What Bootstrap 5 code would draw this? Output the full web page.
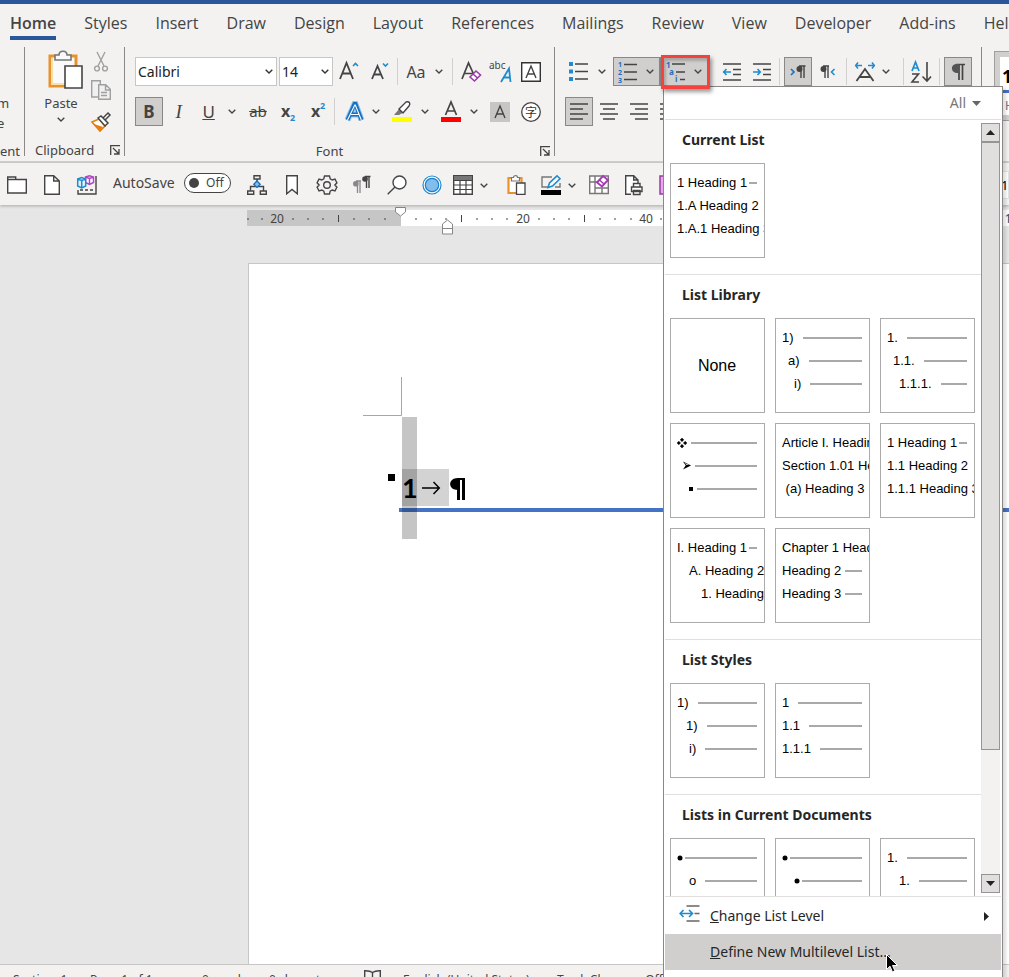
<!DOCTYPE html>
<html lang="en">
<head>
<meta charset="utf-8">
<meta name="viewport" content="width=device-width, initial-scale=1">
<title>Document - Word</title>
<link href="https://cdn.jsdelivr.net/npm/bootstrap@5.3.0/dist/css/bootstrap.min.css" rel="stylesheet">
<style>
  :root { --ink:#444; --line:#a6a6a6; --chrome:#f3f2f1; --blue:#2b579a; --accent:#1e8bcd; --on:#d0cfcd; }
  body { font-family:"Noto Sans","Noto Sans CJK SC",sans-serif; font-size:14px; line-height:20px; color:var(--ink); background:#e6e6e6; }
  button { color:inherit; }
  svg { display:block; flex:none; overflow:visible; }
  .ln { fill:none; stroke:#444; stroke-width:1.4; }
  .titleline { height:4px; background:var(--blue); }
  .tabs { height:43px; gap:28px; padding:0 10px; background:var(--chrome); font:16px/38px "Open Sans","Noto Sans",sans-serif; }
  .tabs a { color:var(--ink); text-decoration:none; white-space:nowrap; height:37px; }
  .tabs a.current { font-weight:600; border-bottom:4px solid var(--blue); height:36px; }
  .ribbon { background:var(--chrome); height:116px; border-bottom:2px solid #d2d0ce; }
  .rgroup { padding:10px 9px 0 10px; height:109px; border-right:1px solid #8a8886; }
  .rrow { height:29px; gap:2px; margin-bottom:11px; }
  .glabel { font-size:13px; height:18px; line-height:18px; margin-top:4px; position:relative; flex:none; }
  .rrow + .glabel { margin-top:16px; }
  .tool { width:28px; height:29px; border:1px solid transparent; background:none; padding:0; display:flex; align-items:center; justify-content:center; line-height:1; font-size:17px; }
  .caret { width:18px; height:29px; border:0; background:none; padding:0; display:flex; align-items:center; justify-content:center; }
  .on { background:var(--on); border:1px solid #8a8886; }
  .vsep { width:1px; height:27px; background:#d2d0ce; margin:0 2px; }
  .combo { appearance:none; border:1px solid #c8c6c4; border-radius:0; background:#fff url("data:image/svg+xml,%3Csvg xmlns='http://www.w3.org/2000/svg' width='8' height='5'%3E%3Cpath d='M.7.7 4 4 7.3.7' fill='none' stroke='%23333' stroke-width='1.4'/%3E%3C/svg%3E") no-repeat right 3px center; padding:0 2px; height:29px; font-size:14px; color:#222; }
  .face { width:142px; } .pts { width:54px; }
  .callout { position:absolute; inset:-2px -2px -3px 1px; border:3px solid #f4433f; box-shadow:2px 3px 4px #0006, inset 2px 3px 3px #0003; z-index:20; pointer-events:none; }
  .gallery { position:absolute; top:100%; left:3px; width:340px; height:calc(100vh - 86px); background:#fff; border:1px solid #8a8886; border-bottom:0; padding:0 1px 7px; z-index:10; box-shadow:3px 2px 3px #0002; color:#262626; }
  .filter { height:33px; border-bottom:1px solid #e1dfdd; padding:0 20px 0 0; flex:none; }
  .filter button { border:0; background:none; color:#777; padding:0; gap:6px; }
  .lists { flex:1 1 0; min-height:0; overflow:hidden; }
  .lists section { padding:0 5px 16px; border-bottom:1px solid #e1dfdd; }
  .lists section:last-child { border:0; }
  .lists h2 { font-size:14px; font-weight:700; line-height:20px; margin:0; padding:10px 12px 13px; height:43px; }
  .thumbs { gap:10px; }
  .thumb { width:95px; height:95px; border:1px solid #ababab; background:#fff; padding:7px 7px 0 6px; overflow:hidden; font:13px/23px "Liberation Sans",sans-serif; color:#000; display:flex; flex-direction:column; text-align:left; white-space:nowrap; }
  .thumb span { display:flex; align-items:center; gap:9px; height:23px; flex:none; width:100%; }
  .thumb span::after { content:""; flex:1 1 auto; height:2px; background:#a9a9a9; }
  .thumb .tight { gap:2px; } .thumb .mid { gap:4px; }
  .thumb .full::after { display:none; }
  .thumb .i1 { padding-left:6px; } .thumb .i2 { padding-left:12px; } .thumb .i4 { padding-left:24px; } .thumb .i3 { padding-left:9px; }
  .thumb .blank { font-size:16px; justify-content:center; height:79px; }
  .sbar { width:19px; margin:3px 1px 3px 0; background:#f3f2f1; }
  .sbar button { height:19px; border:1px solid #979593; background:#e1dfdd; padding:0; display:flex; align-items:center; justify-content:center; }
  .sbar .grip { flex:0 0 83%; border:1px solid #979593; background:#e1dfdd; }
  .cmds { border-top:1px solid #e1dfdd; padding-top:1px; }
  .cmds button { height:36px; border:0; background:none; width:100%; text-align:left; padding:0 12px; display:flex; align-items:center; position:relative; }
  .cmds button > svg:first-child, .cmds .noicon { width:23px; margin-right:10px; }
  .cmds .hover { background:var(--on); }
  .pointer { position:absolute; left:221px; top:20px; }
  .quick { background:var(--chrome); height:42px; padding:2px 0 0 5px; gap:11px; box-shadow:0 1px 3px #0004; position:relative; z-index:1; }
  .quick .tool { width:24px; } .quick .wide { width:22px; } .quick .caret { width:20px; }
  .toggle { width:47px; height:20px; border:1px solid #444; border-radius:10px; background:#fff; font-size:12px; line-height:16px; padding:0 6px 0 4px; margin-top:-5px; }
  .toggle i { width:10px; height:10px; border-radius:50%; background:#444; }
  .desk { flex:1 1 0; min-height:0; overflow:hidden; padding-left:248px; }
  .sheet { background:#fff; border:1px solid #c6c6c6; border-width:1px 0 0 1px; margin-top:31px; padding-left:114px; }
  .heading { position:relative; z-index:0; }
  .selcol { position:absolute; left:39px; top:0; width:15px; height:122px; background:#0000003a; z-index:2; }
  .status { background:var(--chrome); border-top:1px solid #c8c6c4; height:13px; overflow:hidden; font-size:12px; line-height:18px; padding:5px 0 0 13px; white-space:nowrap; }
  .status > * { flex:none; } .status span { margin-top:1px; }
  .styles { width:60px; padding-left:14px; }
  .styles .slot { border:5px solid var(--on); outline:1px solid #a19f9d; background:#fff; margin:5px 0 0 -1px; height:68px; color:#000; }
</style>
</head>
<body class="vh-100 overflow-hidden d-flex flex-column">
<svg width="0" height="0" class="position-absolute" aria-hidden="true">
  <symbol id="chev" viewBox="0 0 8 5"><path d="M.7.7 4 4 7.3.7" fill="none" stroke="#444" stroke-width="1.4"/></symbol>
  <symbol id="launch" viewBox="0 0 10 10"><path d="M.7 10V.7H10M3 3l6 6M9 4v5H4" fill="none" stroke="#444" stroke-width="1.3"/></symbol>
</svg>
<div class="titleline flex-shrink-0"></div>
<nav class="tabs d-flex flex-shrink-0">
  <a href="#" class="current">Home</a><a href="#">Styles</a><a href="#">Insert</a><a href="#">Draw</a><a href="#">Design</a><a href="#">Layout</a><a href="#">References</a><a href="#">Mailings</a><a href="#">Review</a><a href="#">View</a><a href="#">Developer</a><a href="#">Add-ins</a><a href="#">Help</a>
</nav>

<div class="ribbon d-flex flex-shrink-0">
  <!-- tail of the group that is scrolled off to the left -->
  <div class="rgroup flex-shrink-0 d-flex flex-column align-items-end overflow-hidden px-0" style="width:25px">
    <div class="me-auto" style="font-size:13px;margin:36px 0 0 -3px">m<br>e</div>
    <div class="glabel me-1" style="margin-top:9px">ment</div>
  </div>

  <div class="rgroup flex-shrink-0 d-flex flex-column" style="width:100px">
    <div class="d-flex" style="height:80px">
      <button class="border-0 bg-transparent p-0 d-flex flex-column align-items-center" style="width:52px;font-size:13px">
        <svg width="36" height="38" viewBox="0 0 36 38" class="ms-2" style="margin-top:-6px"><path d="M3 5h26v30H3z" fill="#fafafa" stroke="#e8912d" stroke-width="3"/><path d="M5 7v26h16" fill="none" stroke="#fce0a6" stroke-width="2"/><path d="M8 9V4h4c0-5 8-5 8 0h4v5z" fill="#fafafa" stroke="#777" stroke-width="1.6"/><path d="M18 15h17v22H18z" fill="#fff" stroke="#444" stroke-width="1.6"/></svg>
        <span class="mt-1">Paste</span>
        <svg width="8" height="5" class="mt-1"><use href="#chev"/></svg>
      </button>
      <div class="d-flex flex-column align-items-center ms-1 gap-2">
        <button class="border-0 bg-transparent p-0" aria-label="Cut"><svg width="14" height="20" viewBox="0 0 14 20" style="margin-top:-5px"><path d="M3 0l7 14M11 0 4 14" fill="none" stroke="#a0a0a0" stroke-width="1.4"/><circle cx="3" cy="16.500" r="2.400" fill="none" stroke="#a0a0a0" stroke-width="1.400"/><circle cx="11" cy="16.500" r="2.400" fill="none" stroke="#a0a0a0" stroke-width="1.400"/></svg></button>
        <button class="border-0 bg-transparent p-0" aria-label="Copy"><svg width="20" height="20" viewBox="0 0 20 20"><path d="M7 17H.7V.7h8.600V4M7.700 4.700h7l4.600 4.600v10H7.700zM14.500 5v5H19M10 12.500h6M10 15.500h6" fill="#f0f0f0" stroke="#a0a0a0" stroke-width="1.400"/></svg></button>
        <button class="border-0 bg-transparent p-0" aria-label="Format Painter"><svg width="20" height="20" viewBox="0 0 20 20" class="mt-1"><path d="M1 10l7-3 6 7-5 5z" fill="#fff" stroke="#e87d0d" stroke-width="1.600"/><path d="M3 12l9 3-3 4z" fill="#e87d0d"/><path d="M7 6l3-2 7 7-3 3zM12 6l5-5 2 2-5 5" fill="#fff" stroke="#444" stroke-width="1.500"/></svg></button>
      </div>
    </div>
    <div class="glabel d-flex align-items-center justify-content-between" style="margin:9px -5px 0 0">Clipboard <button class="border-0 bg-transparent p-0" aria-label="Clipboard settings"><svg width="10" height="10"><use href="#launch"/></svg></button></div>
  </div>

  <div class="rgroup flex-shrink-0" style="width:430px">
    <div class="rrow d-flex align-items-center">
      <select class="combo face" aria-label="Font"><option>Calibri</option></select>
      <select class="combo pts" aria-label="Font size"><option>14</option></select>
      <button class="tool" aria-label="Grow font"><svg width="20" height="22" viewBox="0 0 20 22"><path d="M1 18 7.500 2 14 18M3.500 12.500h8" class="ln" style="stroke-width:1.800"/><path d="M14 5l2.500-2.500L19 5" fill="none" stroke="#1e8bcd" stroke-width="1.600"/></svg></button>
      <button class="tool" aria-label="Shrink font"><svg width="20" height="22" viewBox="0 0 20 22"><path d="M3 18 8.500 5 14 18M5 13.500h7" class="ln" style="stroke-width:1.800"/><path d="M14 2.500 16.500 5 19 2.500" fill="none" stroke="#1e8bcd" stroke-width="1.600"/></svg></button>
      <div class="vsep"></div>
      <div class="d-flex"><button class="tool" style="font-size:16px">Aa</button><button class="caret" aria-label="Change case options"><svg width="8" height="5"><use href="#chev"/></svg></button></div>
      <div class="vsep"></div>
      <button class="tool" aria-label="Clear formatting"><svg width="22" height="22" viewBox="0 0 22 22"><path d="M2 18 8.500 2l5.500 12M4.500 12.500h8" class="ln" style="stroke-width:1.700"/><path d="M10 16l6-6 4.500 4-6 6zM13 13l4.500 4" fill="#fff" stroke="#9b3ba5" stroke-width="1.600"/></svg></button>
      <button class="tool" aria-label="Text effects"><svg width="22" height="24" viewBox="0 0 22 24"><text x="-1" y="9" font-size="10" fill="#444">abc</text><path d="M11 22 19 8.500 20.500 22M14 17.500h6" fill="none" stroke="#1e8bcd" stroke-width="1.800"/></svg></button>
      <button class="tool" aria-label="Character border"><svg width="20" height="20" viewBox="0 0 20 20"><path d="M.7.7h18.600v18.600H.7z" fill="#fff" stroke="#333" stroke-width="1.400"/><path d="M5 16 10 4l5 12M6.800 12h6.500" class="ln"/></svg></button>
    </div>
    <div class="rrow d-flex align-items-center">
      <button class="tool on fw-bold">B</button>
      <button class="tool fst-italic" style="font-family:'Liberation Serif',serif;font-size:19px">I</button>
      <div class="d-flex"><button class="tool text-decoration-underline">U</button><button class="caret" aria-label="Underline options"><svg width="8" height="5"><use href="#chev"/></svg></button></div>
      <button class="tool text-decoration-line-through" style="font-size:15px;padding-left:3px">ab</button>
      <button class="tool" aria-label="Subscript"><svg width="18" height="22" viewBox="0 0 18 22"><text x="4" y="16" font-size="16" font-weight="700" fill="#444">x</text><text x="13" y="20" font-size="9" font-weight="700" fill="#1e8bcd">2</text></svg></button>
      <button class="tool" aria-label="Superscript"><svg width="18" height="22" viewBox="0 0 18 22"><text x="4" y="16" font-size="16" font-weight="700" fill="#444">x</text><text x="13" y="8" font-size="9" font-weight="700" fill="#1e8bcd">2</text></svg></button>
      <div class="vsep"></div>
      <div class="d-flex" style="gap:3px">
        <div class="d-flex"><button class="tool" aria-label="Text effects and typography"><svg width="20" height="20" viewBox="0 0 20 20"><path d="M4.500 18 11.500 2h1l6 16M8 12.500h8" fill="none" stroke="#8cc6ee" stroke-width="6"/><path d="M4.500 18 11.500 2h1l6 16M8 12.500h8" fill="none" stroke="#1a6fc0" stroke-width="4"/><path d="M4.500 18 11.800 3h.5l6 15M8 12.500h8" fill="none" stroke="#fff" stroke-width="1.100"/></svg></button><button class="caret" aria-label="Text effects options"><svg width="8" height="5"><use href="#chev"/></svg></button></div>
        <div class="d-flex"><button class="tool" aria-label="Highlight"><svg width="20" height="22" viewBox="0 0 20 22"><path d="M2 14 8 7l4 4-5 3z" fill="#777"/><path d="M7 8l7-7c3-1 5 1 3 4l-6 7z" fill="#fff" stroke="#444" stroke-width="1.400"/><path d="M0 16h20v5H0z" fill="#ff0"/></svg></button><button class="caret" aria-label="Highlight colours"><svg width="8" height="5"><use href="#chev"/></svg></button></div>
        <div class="d-flex"><button class="tool" aria-label="Font colour"><svg width="20" height="22" viewBox="0 0 20 22"><path d="M4.500 14 10 1l5.500 13M6.500 10h7" class="ln" style="stroke-width:1.700"/><path d="M0 16h20v5H0z" fill="red"/></svg></button><button class="caret" aria-label="Font colours"><svg width="8" height="5"><use href="#chev"/></svg></button></div>
        <button class="tool" aria-label="Character shading"><svg width="20" height="20" viewBox="0 0 20 20"><path d="M0 0h20v20H0z" fill="#c8c6c4"/><path d="M5 16 10 4l5 12M6.800 12h6.500" class="ln"/></svg></button>
        <button class="tool" aria-label="Enclose characters"><svg width="20" height="20" viewBox="0 0 20 20"><circle cx="10" cy="10" r="9.300" fill="#fff" stroke="#444" stroke-width="1.300"/><text x="4" y="14.500" font-size="12" fill="#333">字</text></svg></button>
      </div>
    </div>
    <div class="glabel text-center" style="margin-right:-5px;padding-right:26px">Font <button class="border-0 bg-transparent p-0 position-absolute end-0 top-0 mt-1" aria-label="Font settings"><svg width="10" height="10"><use href="#launch"/></svg></button></div>
  </div>

  <div class="rgroup flex-shrink-0" style="width:427px">
    <div class="rrow d-flex align-items-center">
      <div class="d-flex"><button class="tool" aria-label="Bullets"><svg width="20" height="20" viewBox="0 0 20 20"><path d="M0 0h4v4H0zM0 7.500h4v4H0zM0 15h4v4H0z" fill="#1e8bcd"/><path d="M6 2h13M6 9.500h13M6 17h13" class="ln"/></svg></button><button class="caret" aria-label="Bullet library"><svg width="8" height="5"><use href="#chev"/></svg></button></div>
      <div class="on d-flex align-items-center" style="height:29px"><button class="tool" style="width:27px" aria-label="Numbering"><svg width="20" height="22" viewBox="0 0 20 22"><g font-size="7" font-weight="700" fill="#1a6fc0"><text x="0" y="6">1</text><text x="0" y="14">2</text><text x="0" y="22">3</text></g><path d="M6 3.500h13M6 11h13M6 18.500h13" class="ln"/></svg></button><button class="caret" aria-label="Numbering library"><svg width="8" height="5"><use href="#chev"/></svg></button></div>
      <div class="position-relative" style="margin-left:-2px">
        <div class="on d-flex align-items-center" style="height:29px"><button class="tool" aria-label="Multilevel list"><svg width="20" height="22" viewBox="0 0 20 22"><g font-size="8" font-weight="700" fill="#1a6fc0"><text x="1" y="7">1</text><text x="4" y="14">a</text><text x="10" y="21">i</text></g><path d="M7 3h13M11 11h9M15 18.500h5" class="ln"/></svg></button><button class="caret" aria-label="Multilevel list library"><svg width="8" height="5"><use href="#chev"/></svg></button></div>
        <div class="callout"></div>
        <div class="gallery d-flex flex-column">
          <div class="filter d-flex justify-content-end align-items-center"><button class="d-flex align-items-center">All <svg width="9" height="5"><path d="M0 0h9L4.500 5z" fill="#666"/></svg></button></div>
          <div class="d-flex flex-fill" style="min-height:0">
            <div class="lists">
              <section><h2>Current List</h2>
                <div class="thumbs d-flex flex-wrap">
                  <button class="thumb"><span class="tight">1 Heading 1</span><span class="full">1.A Heading 2</span><span class="full">1.A.1 Heading 3</span></button>
                </div></section>
              <section><h2>List Library</h2>
                <div class="thumbs d-flex flex-wrap">
                  <button class="thumb"><span class="blank full">None</span></button>
                  <button class="thumb"><span>1)</span><span class="i1">a)</span><span class="i2">i)</span></button>
                  <button class="thumb"><span>1.</span><span class="i1">1.1.</span><span class="i2">1.1.1.</span></button>
                  <button class="thumb"><span class="mid"><svg width="10" height="10" viewBox="0 0 11 11"><path d="M5.500 0 7.500 2 5.500 4 3.500 2zM5.500 7l2 2-2 2-2-2zM2 3.500l2 2-2 2-2-2zM9 3.500l2 2-2 2-2-2z" stroke="#000" stroke-width=".5"/></svg></span><span class="i1 mid"><svg width="8" height="9" viewBox="0 0 9 9"><path d="M0 0 9 4.500 0 9l3-4.500z"/><path d="M1.500 1.300 7 4H3.700z" fill="#ccc"/></svg></span><span class="i2 mid"><svg width="4" height="4"><path d="M0 0h4v4H0z"/></svg></span></button>
                  <button class="thumb"><span class="full">Article I. Heading 1</span><span class="full">Section 1.01 Heading 2</span><span class="full">&nbsp;(a) Heading 3</span></button>
                  <button class="thumb"><span class="tight">1 Heading 1</span><span class="full">1.1 Heading 2</span><span class="full">1.1.1 Heading 3</span></button>
                  <button class="thumb"><span class="tight">I. Heading 1</span><span class="i2 full">A. Heading 2</span><span class="i4 full">1. Heading 3</span></button>
                  <button class="thumb"><span class="full">Chapter 1 Heading 1</span><span class="mid">Heading 2</span><span class="mid">Heading 3</span></button>
                </div></section>
              <section><h2>List Styles</h2>
                <div class="thumbs d-flex flex-wrap">
                  <button class="thumb"><span>1)</span><span class="i3">1)</span><span class="i2">i)</span></button>
                  <button class="thumb"><span>1</span><span>1.1</span><span>1.1.1</span></button>
                </div></section>
              <section><h2>Lists in Current Documents</h2>
                <div class="thumbs d-flex flex-wrap">
                  <button class="thumb"><span class="tight"><svg width="6" height="6"><circle cx="3" cy="3" r="2.500"/></svg></span><span class="i2">o</span></button>
                  <button class="thumb"><span class="tight"><svg width="6" height="6"><circle cx="3" cy="3" r="2.500"/></svg></span><span class="i2 tight"><svg width="6" height="6"><circle cx="3" cy="3" r="2.500"/></svg></span></button>
                  <button class="thumb"><span>1.</span><span class="i2">1.</span></button>
                </div></section>
            </div>
            <div class="sbar d-flex flex-column">
              <button aria-label="Scroll up"><svg width="9" height="5"><path d="M0 5h9L4.500 0z" fill="#222"/></svg></button>
              <div class="flex-fill d-flex flex-column"><div class="grip"></div></div>
              <button aria-label="Scroll down"><svg width="9" height="5"><path d="M0 0h9L4.500 5z" fill="#222"/></svg></button>
            </div>
          </div>
          <div class="cmds">
            <button><svg width="20" height="18" viewBox="0 0 20 18" style="margin-top:-4px"><path d="M8 1h13M16 8.500h5M8 16h13" fill="none" stroke="#666" stroke-width="1.600"/><path d="M1 8.500h12M5 5 1.700 8.500 5 12M10.500 5l3.500 3.500-3.500 3.500" fill="none" stroke="#1e8bcd" stroke-width="1.600"/></svg><span><u>C</u>hange List Level</span><svg class="ms-auto" width="5" height="9"><path d="M0 0 5 4.500 0 9z" fill="#222"/></svg></button>
            <button class="hover"><span class="noicon"></span><span><u>D</u>efine New Multilevel List...</span><svg class="pointer" width="12" height="19" viewBox="0 0 12 19"><path d="M.5.5v15l3.500-3.300 2.400 5.600 2.500-1L6.500 11.500h5z" fill="#000" stroke="#fff"/></svg></button>
          </div>
        </div>
      </div>
      <button class="tool ms-2" aria-label="Decrease indent"><svg width="18" height="18" viewBox="0 0 18 18"><path d="M0 1h18M10 6.500h8M10 11.500h8M0 17h18" class="ln"/><path d="M0 9h8M3.500 6 .7 9l2.800 3" fill="none" stroke="#1e8bcd" stroke-width="1.600"/></svg></button>
      <button class="tool" aria-label="Increase indent"><svg width="18" height="18" viewBox="0 0 18 18"><path d="M0 1h18M10 6.500h8M10 11.500h8M0 17h18" class="ln"/><path d="M0 9h7.500M4.500 6l2.800 3-2.800 3" fill="none" stroke="#1e8bcd" stroke-width="1.600"/></svg></button>
      <div class="vsep"></div>
      <button class="tool on" aria-label="Left-to-right"><svg width="16" height="14" viewBox="0 0 16 14"><path d="M1 4l3 3-3 3" fill="none" stroke="#1a6fc0" stroke-width="1.600"/><path d="M11 1v12M14 1v12M9 1h6.500" class="ln"/><circle cx="9.500" cy="4" r="3" fill="#444"/></svg></button>
      <button class="tool" aria-label="Right-to-left"><svg width="16" height="14" viewBox="0 0 16 14"><path d="M14.500 4l-3 3 3 3" fill="none" stroke="#1e8bcd" stroke-width="1.600"/><path d="M5 1v12M8 1v12M3 1h6" class="ln"/><circle cx="3.500" cy="4" r="3" fill="#444"/></svg></button>
      <div class="vsep"></div>
      <div class="d-flex"><button class="tool" aria-label="Asian layout"><svg width="20" height="20" viewBox="0 0 20 20"><path d="M1.500 19 10 7l8.500 12M5 15h10" class="ln" style="stroke-width:1.800"/><path d="M0 3.500h7M3 .5 .7 3.500 3 6.500M13 3.500h7M17 .5l2.300 3L17 6.500" fill="none" stroke="#1e8bcd" stroke-width="1.500"/></svg></button><button class="caret" style="width:14px" aria-label="Asian layout options"><svg width="8" height="5"><use href="#chev"/></svg></button></div>
      <div class="vsep ms-2"></div>
      <button class="tool" aria-label="Sort"><svg width="20" height="22" viewBox="0 0 20 22"><path d="M1 10 4.500 1 8 10M2.500 7h4" fill="none" stroke="#1e8bcd" stroke-width="1.700"/><path d="M1 13h6.500L1 21h7M16 1v19M11.500 15.500 16 20l4-4.500" class="ln" style="stroke-width:1.600"/></svg></button>
      <div class="vsep"></div>
      <button class="tool on" aria-label="Show paragraph marks"><svg width="14" height="18" viewBox="0 0 14 18"><path d="M8 1v16M11.500 1v16M5 1.500h9" class="ln" style="stroke-width:1.700"/><path d="M8 1v9H5C-.5 9-.5 1.500 5 1z" fill="#555"/></svg></button>
    </div>
    <div class="rrow d-flex align-items-center">
      <button class="tool on" aria-label="Align left"><svg width="18" height="18" viewBox="0 0 18 18"><path d="M0 1h18M0 6h13M0 11h18M0 16h13" class="ln"/></svg></button>
      <button class="tool" aria-label="Centre"><svg width="18" height="18" viewBox="0 0 18 18"><path d="M0 1h18M3 6h12M0 11h18M3 16h12" class="ln"/></svg></button>
      <button class="tool" aria-label="Align right"><svg width="18" height="18" viewBox="0 0 18 18"><path d="M0 1h18M5 6h13M0 11h18M5 16h13" class="ln"/></svg></button>
      <button class="tool" aria-label="Justify"><svg width="18" height="18" viewBox="0 0 18 18"><path d="M0 1h18M0 6h18M0 11h18M0 16h18" class="ln"/></svg></button>
    </div>
  </div>
  <div class="styles flex-shrink-0">
    <div class="slot"><div class="fw-bold" style="font-size:18px;margin-top:9px;padding-left:2px">1</div><div style="height:3px;background:#4472c4;margin-top:4px"></div><div class="text-secondary" style="font-size:12px;padding:3px 0 0 5px">Heading</div></div>
  </div>
</div>

<div class="quick d-flex align-items-center flex-shrink-0">
  <button class="tool" aria-label="Open"><svg width="20" height="18" viewBox="0 0 20 18"><path d="M.7 1h8v2.500h10.600V17H.7zM.7 3.500h8" class="ln" style="fill:#fff"/></svg></button>
  <button class="tool" aria-label="New"><svg width="16" height="20" viewBox="0 0 16 20"><path d="M.7.7h9L15.300 6v13.300H.7zM9.700.7V6h5.600" class="ln" style="fill:#fff"/></svg></button>
  <button class="tool" aria-label="Blocks"><svg width="20" height="20" viewBox="0 0 20 20"><path d="M1 15v4h18V1M3 15h3M8 15h3M13 15h3" class="ln"/><path d="M8.500 2 12.500.7l4 1.300v5.500l-4 2-4-2zM8.500 2l4 1.500 4-1.500M12.500 3.500v6" fill="#fff" stroke="#b146c2" stroke-width="1.500"/><path d="M.7 4l4-1.500L8.700 4v7l-4 2-4-2zM.7 4l4 1.500L8.700 4M4.700 5.500V13" fill="#e6f3fc" stroke="#1e8bcd" stroke-width="1.500"/></svg></button>
  <label for="autosave" style="margin:-5px -2px 0 3px">AutoSave</label>
  <button id="autosave" class="toggle d-flex align-items-center justify-content-between"><i></i>Off</button>
  <button class="tool" style="margin-left:3px" aria-label="Organisation chart"><svg width="20" height="20" viewBox="0 0 20 20"><path d="M7 .7h6V4H7zM.7 16h6v3.300h-6zM13.300 16h6v3.300h-6zM10 4v2M3.500 16v-4.500h13V16" class="ln"/><path d="M10 6l3.200 3.200L10 12.400 6.800 9.200z" fill="#7fc0ee" stroke="#1a6fc0" stroke-width="1.300"/></svg></button>
  <button class="tool" aria-label="Bookmark"><svg width="12" height="20" viewBox="0 0 12 20"><path d="M.7.7h10.600v18L6 14.500l-5.300 4.200z" class="ln" style="fill:#fff"/></svg></button>
  <button class="tool" aria-label="Options"><svg width="20" height="20" viewBox="0 0 20 20"><path d="M7.500 1h5l.7 2.900 2 1.100 2.800-.9 1.900 3.700-2 2.200 2 2.200-1.900 3.700-2.800-.9-2 1.100-.7 2.900h-5l-.7-2.900-2-1.100-2.800.9L.1 12.200l2-2.200-2-2.200L2 4.100l2.800.9 2-1.100z" class="ln"/><circle cx="10" cy="10" r="3.300" class="ln"/></svg></button>
  <button class="tool" aria-label="Paragraph marks"><svg width="18" height="20" viewBox="0 0 18 20"><path d="M4.500 6v12M7 6v12M3 6h5" fill="none" stroke="#888" stroke-width="1.300"/><circle cx="2.800" cy="8.800" r="2.800" fill="#888"/><path d="M13.500 1v12M16 1v12M12 1.500h5.500" class="ln"/><circle cx="12" cy="4" r="2.800" fill="#444"/></svg></button>
  <button class="tool" aria-label="Find"><svg width="20" height="20" viewBox="0 0 20 20"><circle cx="12.500" cy="7.500" r="6.500" class="ln" style="fill:#fff"/><path d="M8 12 .7 19.300" class="ln"/></svg></button>
  <button class="tool" aria-label="Record"><svg width="20" height="20" viewBox="0 0 20 20"><circle cx="10" cy="10" r="9" fill="#fff" stroke="#1e8bcd" stroke-width="1.200"/><circle cx="10" cy="10" r="6.700" fill="#83bdec" stroke="#1a7fd0" stroke-width="1.200"/></svg></button>
  <div class="d-flex ms-n1" style="margin-left:-3px"><button class="tool wide" aria-label="Table"><svg width="20" height="20" viewBox="0 0 20 20"><path d="M.7.7h18.600v18.600H.7z" class="ln" style="fill:#fff"/><path d="M1 1h18v4H1z" fill="#777"/><path d="M1 5.500h18M1 10h18M1 14.500h18M7 5v14M13 5v14" class="ln" style="stroke-width:1.200"/></svg></button><button class="caret" aria-label="Table options"><svg width="8" height="5"><use href="#chev"/></svg></button></div>
  <button class="tool" aria-label="Paste"><svg width="19" height="20" viewBox="0 0 19 20"><path d="M1.500 3h13v15h-13z" fill="#fff" stroke="#e8912d" stroke-width="2.200"/><path d="M4.500 6V2.500h2c0-2.500 4-2.500 4 0h2V6z" fill="#fff" stroke="#777" stroke-width="1.200"/><path d="M9.500 8H18v11.300H9.500z" fill="#fff" stroke="#444" stroke-width="1.300"/></svg></button>
  <div class="d-flex" style="margin-right:-6px"><button class="tool wide" aria-label="Pen colour"><svg width="20" height="20" viewBox="0 0 20 20"><path d="M11 2H1v10h6M14 12h5V8" class="ln" style="stroke:#777"/><path d="M7 12.500 8.500 8 16 .8l3 3L11.500 11z" fill="#fff" stroke="#1e8bcd" stroke-width="1.600"/><path d="M0 15h20v5H0z" fill="#000"/></svg></button><button class="caret" aria-label="Pen colours"><svg width="8" height="5"><use href="#chev"/></svg></button></div>
  <button class="tool" aria-label="Table eraser"><svg width="20" height="20" viewBox="0 0 20 20"><path d="M.7 1h18.600v17.500H.7zM6 1v17M1 7h9M6 13h13M13 13v5" class="ln" style="fill:#fff;stroke:#777"/><path d="M8 7.500l6-6.500L19 5l-6 6.500z" fill="#fff" stroke="#a03bb0" stroke-width="1.900"/><path d="M10.500 5l4.500 4" stroke="#a03bb0" stroke-width="1.500"/></svg></button>
  <button class="tool" aria-label="Print preview"><svg width="18" height="20" viewBox="0 0 18 20"><path d="M6 19.300H.7V.7h8L13 5v4M8.700.7V5H13" class="ln" style="fill:#fff"/><path d="M6.500 12H17v4.500H6.500zM8.500 12V8.500H15V12M8.500 15.500H15v4H8.500z" class="ln" style="fill:#fff"/></svg></button>
  <button class="tool" aria-label="Save"><svg width="20" height="20" viewBox="0 0 20 20"><path d="M1 1h18v18H1z" fill="#e3a9ea" stroke="#9b3ba5" stroke-width="1.500"/><path d="M5 1v7h10V1M5 19v-6h10v6" fill="#fff" stroke="#9b3ba5" stroke-width="1.500"/></svg></button>
  <input class="ms-auto border rounded-0 p-0 flex-shrink-0" aria-label="Copies" value="1" style="width:9px;height:28px;font-size:13px">
</div>

<main class="desk">
  <svg width="100%" height="25" style="margin-top:2px" aria-hidden="true">
    <path d="M-1 3h154v16H-1z" fill="#c6c6c6"/><rect x="153" y="3" width="100%" height="16" fill="#fff"/>
    <g fill="#444" font-size="12" text-anchor="middle"><text x="29" y="16">20</text><text x="275" y="16">20</text><text x="398" y="16">40</text><text x="767" y="16">100</text></g>
    <path d="M0 11v2M14 11v2M45 11v2M60 11v2M75 11v2M90.500 8v7M106 11v2M121 11v2M137 11v2M168 11v2M183 11v2M198 11v2M213.500 8v7M229 11v2M244 11v2M259 11v2M291 11v2M306 11v2M321 11v2M336.500 8v7M352 11v2M367 11v2M383 11v2M413 11v2" stroke="#444"/>
    <path d="M147.500.5h10V5l-5 4-5-4zM194.500 21v-4l5-4 5 4v10h-10zM194.500 21.500h10" fill="#fff" stroke="#888"/>
  </svg>
  <div class="sheet h-100">
    <svg width="39" height="39" style="margin-top:113px"><path d="M38.500 0v38.500H0" fill="none" stroke="#a6a6a6"/></svg>
    <div class="heading w-100" style="margin-top:1px">
      <div class="selcol"></div>
      <div class="d-flex align-items-center" style="padding:52px 0 0 25px">
        <svg width="7" height="7" style="margin:-20px 7px 0 0"><path d="M0 0h7v7H0z"/></svg>
        <div class="d-flex align-items-center" style="background:#d3d3d3;height:37px;width:47px;color:#000"><b style="font:700 27px/37px Lato,sans-serif">1</b><svg width="18" height="14" class="ms-1" viewBox="0 0 18 14"><path d="M0 7h17M11.500 1 17.300 7l-5.800 6" fill="none" stroke="#000" stroke-width="1.500"/></svg></div>
        <svg width="15" height="22" viewBox="0 0 15 22" style="margin:3px 0 0 1px"><path d="M8.500 0H15v2H8.500z"/><path d="M7 0h3v22H7zM12 0h3v22h-3z"/><path d="M8 0v12C-2.500 12-2.500 0 8 0z"/></svg>
      </div>
      <div style="height:4px;background:#4472c4;margin:2px 0 0 36px"></div>
    </div>
  </div>
</main>

<footer class="status d-flex flex-shrink-0">
  <span style="width:77px">Section: 1</span><span style="width:112px">Page 1 of 1</span><span style="width:67px">0 words</span><span style="width:95px">0 characters</span>
  <svg width="17" height="14" viewBox="0 0 17 14"><path d="M8.500 2.500C6 .5 3 .7.700.700V14M8.500 2.500C11 .5 14 .7 16.300.700V14M8.500 2.500V14" class="ln"/></svg>
  <span style="width:176px;padding-left:22px">English (United States)</span><span>Track Changes: Off</span>
</footer>
<script src="https://cdn.jsdelivr.net/npm/bootstrap@5.3.0/dist/js/bootstrap.bundle.min.js"></script>
</body>
</html>
